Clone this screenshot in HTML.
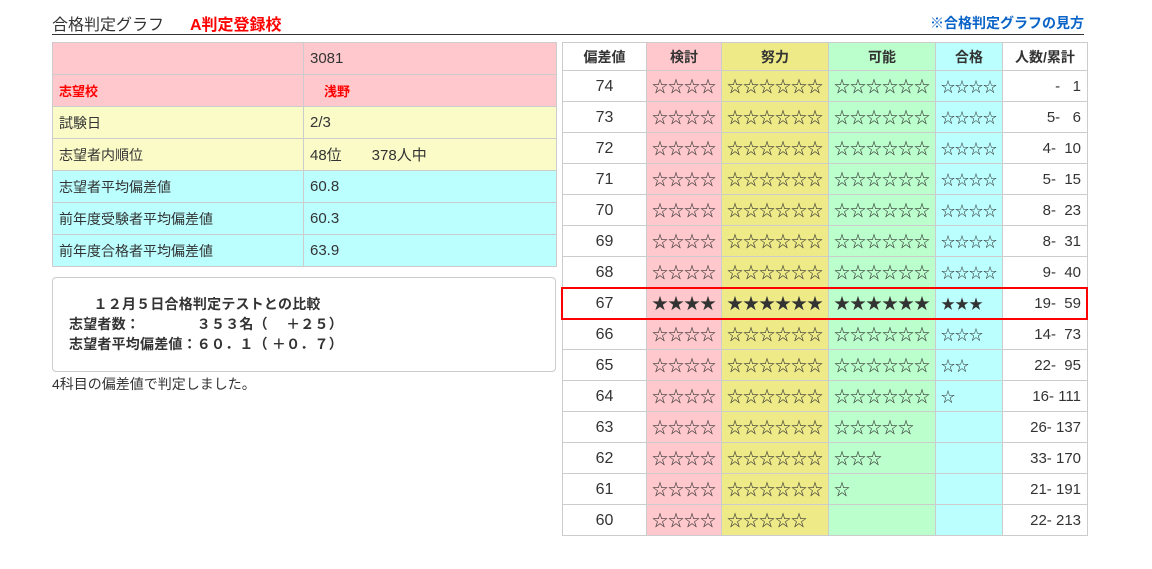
<!DOCTYPE html>
<html><head><meta charset="utf-8"><style>
*{margin:0;padding:0;box-sizing:border-box}
body{width:1152px;height:569px;background:#fff;font-family:"Liberation Sans","Noto Sans CJK JP",sans-serif;color:#333;position:relative;overflow:hidden}
.abs{position:absolute}
table{border-collapse:collapse;table-layout:fixed}
td,th{border:1px solid #ccc;font-size:14px;vertical-align:middle}
#lt td{height:32px;padding-left:6px}
#rt th{height:28px;font-weight:bold;font-size:14px;text-align:center}
#rt td{height:31px}
.st{font-family:"Noto Sans CJK JP",sans-serif;font-size:16px;line-height:16px;padding-left:5px;padding-bottom:2px;color:#333;white-space:nowrap}
.b.st{font-size:14px;padding-bottom:0;padding-top:1px}
.n{text-align:center;font-size:16px;padding-top:1px}
.c{text-align:right;padding-right:6px;font-size:15px;white-space:pre;padding-top:1px}
.p{background:#ffc8cc}.y{background:#eeea88}.g{background:#bbffcc}.b{background:#bbffff}
</style></head><body>
<div class="abs" style="left:52px;top:11px;font-size:16px;color:#333">合格判定グラフ</div>
<div class="abs" style="left:190px;top:11px;font-size:16px;color:#f00;font-weight:bold">A判定登録校</div>
<div class="abs" style="left:930px;top:13px;font-size:14px;color:#0a64c8;font-weight:bold">※合格判定グラフの見方</div>
<div class="abs" style="left:52px;top:34px;width:1032px;height:1px;background:#333"></div>

<table id="lt" class="abs" style="left:52px;top:42px;width:504px">
<col style="width:251px"><col style="width:253px">
<tr class="p"><td></td><td style="font-size:15px">3081</td></tr>
<tr class="p" style="color:#f00;font-weight:bold"><td style="font-size:13px">志望校</td><td style="font-size:13px;padding-left:20px">浅野</td></tr>
<tr style="background:#fbfbc8"><td>試験日</td><td style="font-size:15px">2/3</td></tr>
<tr style="background:#fbfbc8"><td>志望者内順位</td><td style="font-size:15px">48位　　378人中</td></tr>
<tr class="b"><td>志望者平均偏差値</td><td style="font-size:15px">60.8</td></tr>
<tr class="b"><td>前年度受験者平均偏差値</td><td style="font-size:15px">60.3</td></tr>
<tr class="b"><td>前年度合格者平均偏差値</td><td style="font-size:15px">63.9</td></tr>
</table>

<div class="abs" style="left:52px;top:277px;width:504px;height:95px;border:1px solid #ccc;border-radius:4px;font-size:14px;font-weight:bold;line-height:20px;padding:16px 0 0 16px;white-space:pre;letter-spacing:0.2px">      １２月５日合格判定テストとの比較
志望者数：　　　　３５３名（　 ＋２５）
志望者平均偏差値：６０．１（ ＋０．７）</div>
<div class="abs" style="left:52px;top:374px;font-size:14px">4科目の偏差値で判定しました。</div>

<table id="rt" class="abs" style="left:562px;top:42px;width:525px">
<col style="width:84px"><col style="width:75px"><col style="width:107px"><col style="width:107px"><col style="width:67px"><col style="width:85px">
<tr><th>偏差値</th><th class="p">検討</th><th class="y">努力</th><th class="g">可能</th><th class="b">合格</th><th>人数/累計</th></tr>
<tr><td class="n">74</td><td class="p st">☆☆☆☆</td><td class="y st">☆☆☆☆☆☆</td><td class="g st">☆☆☆☆☆☆</td><td class="b st">☆☆☆☆</td><td class="c">-   1</td></tr>
<tr><td class="n">73</td><td class="p st">☆☆☆☆</td><td class="y st">☆☆☆☆☆☆</td><td class="g st">☆☆☆☆☆☆</td><td class="b st">☆☆☆☆</td><td class="c">5-   6</td></tr>
<tr><td class="n">72</td><td class="p st">☆☆☆☆</td><td class="y st">☆☆☆☆☆☆</td><td class="g st">☆☆☆☆☆☆</td><td class="b st">☆☆☆☆</td><td class="c">4-  10</td></tr>
<tr><td class="n">71</td><td class="p st">☆☆☆☆</td><td class="y st">☆☆☆☆☆☆</td><td class="g st">☆☆☆☆☆☆</td><td class="b st">☆☆☆☆</td><td class="c">5-  15</td></tr>
<tr><td class="n">70</td><td class="p st">☆☆☆☆</td><td class="y st">☆☆☆☆☆☆</td><td class="g st">☆☆☆☆☆☆</td><td class="b st">☆☆☆☆</td><td class="c">8-  23</td></tr>
<tr><td class="n">69</td><td class="p st">☆☆☆☆</td><td class="y st">☆☆☆☆☆☆</td><td class="g st">☆☆☆☆☆☆</td><td class="b st">☆☆☆☆</td><td class="c">8-  31</td></tr>
<tr><td class="n">68</td><td class="p st">☆☆☆☆</td><td class="y st">☆☆☆☆☆☆</td><td class="g st">☆☆☆☆☆☆</td><td class="b st">☆☆☆☆</td><td class="c">9-  40</td></tr>
<tr><td class="n">67</td><td class="p st">★★★★</td><td class="y st">★★★★★★</td><td class="g st">★★★★★★</td><td class="b st">★★★</td><td class="c">19-  59</td></tr>
<tr><td class="n">66</td><td class="p st">☆☆☆☆</td><td class="y st">☆☆☆☆☆☆</td><td class="g st">☆☆☆☆☆☆</td><td class="b st">☆☆☆</td><td class="c">14-  73</td></tr>
<tr><td class="n">65</td><td class="p st">☆☆☆☆</td><td class="y st">☆☆☆☆☆☆</td><td class="g st">☆☆☆☆☆☆</td><td class="b st">☆☆</td><td class="c">22-  95</td></tr>
<tr><td class="n">64</td><td class="p st">☆☆☆☆</td><td class="y st">☆☆☆☆☆☆</td><td class="g st">☆☆☆☆☆☆</td><td class="b st">☆</td><td class="c">16- 111</td></tr>
<tr><td class="n">63</td><td class="p st">☆☆☆☆</td><td class="y st">☆☆☆☆☆☆</td><td class="g st">☆☆☆☆☆</td><td class="b st"></td><td class="c">26- 137</td></tr>
<tr><td class="n">62</td><td class="p st">☆☆☆☆</td><td class="y st">☆☆☆☆☆☆</td><td class="g st">☆☆☆</td><td class="b st"></td><td class="c">33- 170</td></tr>
<tr><td class="n">61</td><td class="p st">☆☆☆☆</td><td class="y st">☆☆☆☆☆☆</td><td class="g st">☆</td><td class="b st"></td><td class="c">21- 191</td></tr>
<tr><td class="n">60</td><td class="p st">☆☆☆☆</td><td class="y st">☆☆☆☆☆</td><td class="g st"></td><td class="b st"></td><td class="c">22- 213</td></tr>
</table>
<div class="abs" style="left:561px;top:287px;width:527px;height:33px;border:2px solid #f00"></div>
</body></html>
